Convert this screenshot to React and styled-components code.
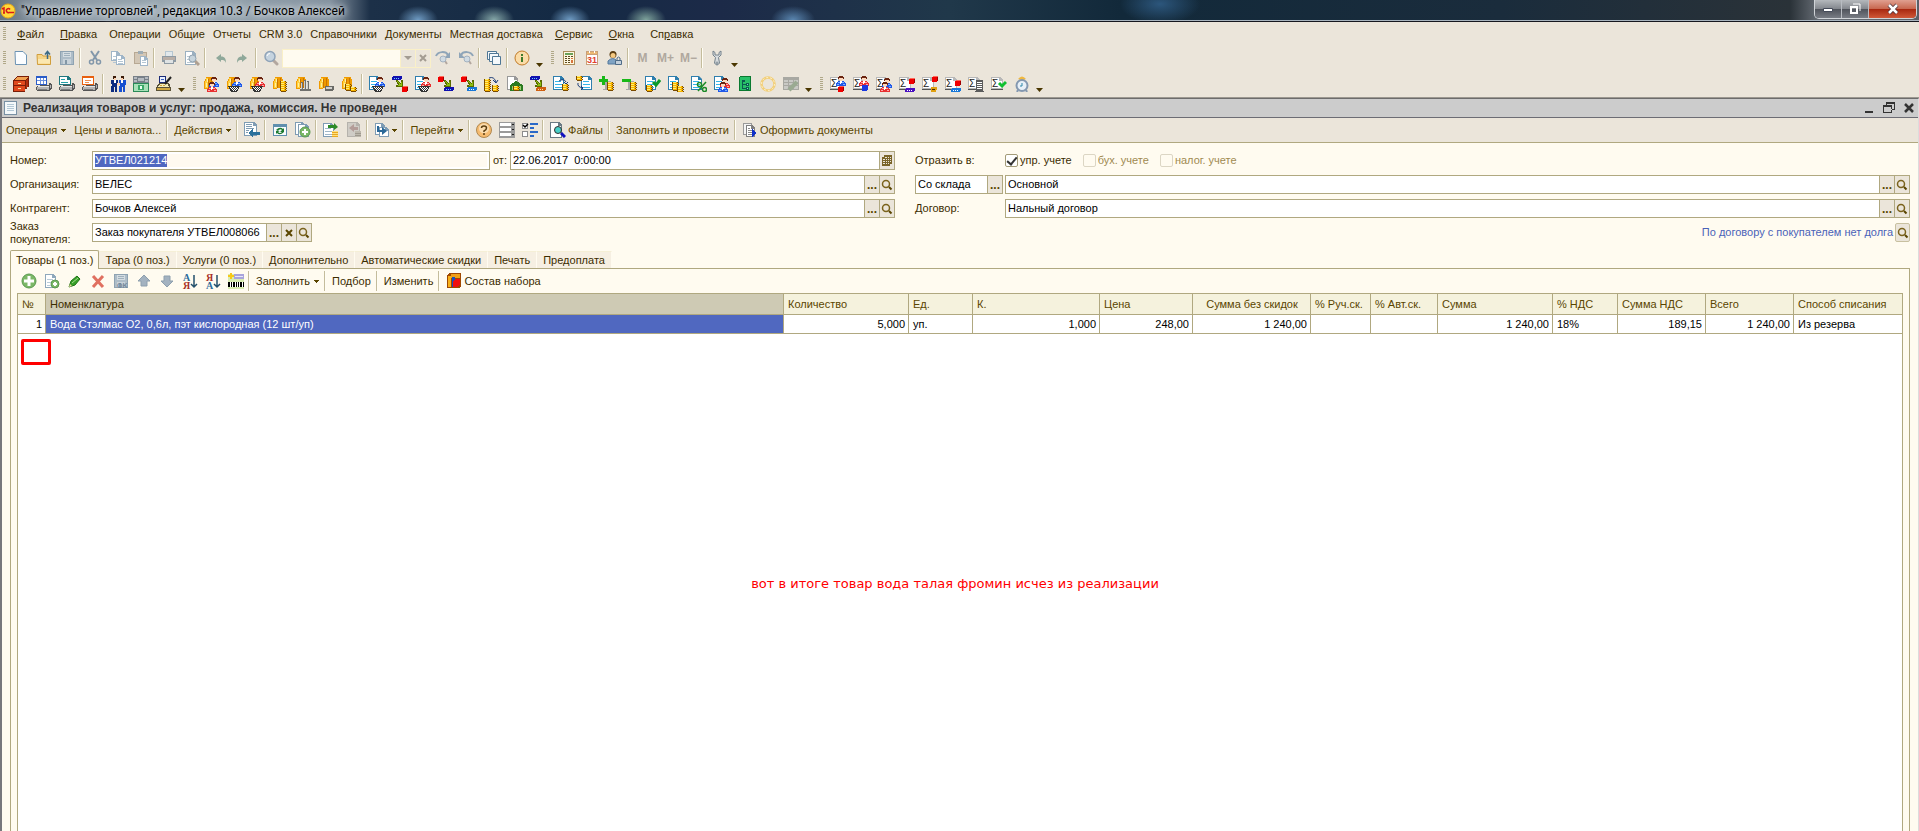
import React, { useEffect, useRef } from 'react';
import styled, { createGlobalStyle, css } from 'styled-components';

/* ---------- icon parts ---------- */

const Svg = ({ children, size = 16, crisp = true }) => (
  <svg width={size} height={size} viewBox={`0 0 ${size} ${size}`} shapeRendering={crisp ? 'crispEdges' : 'auto'} aria-hidden="true">
    {children}
  </svg>
);

const Page = ({ x = 0, y = 0, w = 11, h = 14, line = '#2f7fae', rows = '#35b5e8' }) => (
  <g transform={`translate(${x} ${y})`}>
    <path d={`M0 0H${w - 3}L${w} 3V${h}H0Z`} fill={line} />
    <path d={`M1 1H${w - 4}V4H${w - 1}V${h - 1}H1Z`} fill="#fff" />
    {rows && <path d={`M2 5H${w - 3}V6H2ZM2 8H${w - 2}V9H2ZM2 11H${w - 2}V12H2Z`} fill={rows} />}
  </g>
);

const Coins = ({ x = 0, y = 0, n = 3 }) => (
  <g transform={`translate(${x} ${y})`}>
    {Array.from({ length: n }, (_, i) => (
      <g key={i} transform={`translate(0 ${i * 2})`}>
        <path d="M0 0H6V1H7V2H6V3H1V2H0Z" fill="#7a4a00" />
        <path d="M1 0H5V1H6V2H1Z" fill="#f8b400" />
        <path d="M1 0H4V1H1Z" fill="#ffee70" />
      </g>
    ))}
  </g>
);

const Man = ({ x = 0, y = 0, color = '#2058e8', light = '#7ab0ff' }) => (
  <g transform={`translate(${x} ${y})`}>
    <path d="M3 0H7V1H8V3H7V2H3V3H2V1H3Z" fill="#6a2410" />
    <path d="M3 2H7V4H6V5H4V4H3Z" fill="#ffd8bc" />
    <path d="M2 5H8V6H9V7H10V10H0V7H1V6H2Z" fill={color} />
    <path d="M2 6H4V7H2ZM6 6H8V7H6ZM1 8H3V9H1ZM7 8H9V9H7Z" fill={light} />
    <path d="M4 5H6V7H5V8H4Z" fill="#fff" />
  </g>
);

const RedMan = props => <Man color="#e83030" light="#ffa8a8" {...props} />;

const Cart = ({ x = 0, y = 0 }) => (
  <g transform={`translate(${x} ${y})`}>
    <path d="M0 0H12V1H11V3H10V5H9V6H3V5H2V3H1V1H0Z" fill="#333" />
    <path d="M2 1H3V2H2ZM4 1H5V2H4ZM6 1H7V2H6ZM8 1H9V2H8ZM3 2H4V3H3ZM5 2H6V3H5ZM7 2H8V3H7ZM9 2H10V3H9ZM4 3H5V4H4ZM6 3H7V4H6ZM8 3H9V4H8ZM5 4H6V5H5ZM7 4H8V5H7Z" fill="#fff" />
  </g>
);

const Folder = () => (
  <g>
    <path d="M3 1H10V3H11V12H5V13H1V5H2V3H3Z" fill="#f09a00" />
    <path d="M3 2H5V3H6V12H2V5H3Z" fill="#ffd040" />
    <path d="M5 3H6V12H5ZM8 2H9V12H8Z" fill="#c87400" />
    <path d="M4 3H5V6H4ZM3 7H4V11H3Z" fill="#fff0a0" />
  </g>
);

const RedBox = ({ x = 0, y = 0 }) => (
  <g transform={`translate(${x} ${y})`}>
    <path d="M1 0H6V5H5V6H0V1H1Z" fill="#f00000" />
    <path d="M1 0H6V1H1Z" fill="#ff6a5a" />
    <path d="M5 1H6V5H5Z" fill="#a00000" />
  </g>
);

const Slab = ({ x = 0, y = 0, color = '#1010b0', dots = '#6ad0ff' }) => (
  <g transform={`translate(${x} ${y})`}>
    <path d="M1 0H10V3H9V4H0V1H1Z" fill={color} />
    <path d="M2 2H3V3H2ZM4 2H5V3H4ZM6 2H7V3H6Z" fill={dots} />
  </g>
);

const GreenArrow = ({ x = 0, y = 0 }) => (
  <g transform={`translate(${x} ${y})`}>
    <path d="M0 0H2V1H3V2H4V3H5V0H7V7H0V5H2V4H1V2H0Z" fill="#5a6a00" />
    <path d="M1 1H2V2H3V3H4V4H5V2H6V6H2V5H3V3H2V2H1Z" fill="#8cc010" />
  </g>
);

const Tray = ({ children }) => (
  <g>
    {children}
    <path d="M1 10H4V9H13V7H15V8H16V13H15V14H14V15H1V14H0V11H1Z" fill="#555" />
    <path d="M1 11H13V14H1ZM14 9H15V12H14Z" fill="#b4b4b4" />
    <path d="M2 10H13V11H2Z" fill="#e6e6e6" />
    <path d="M2 13H11V14H2Z" fill="#7c7c7c" />
  </g>
);

const Curve = ({ d, color = '#1c3c78' }) => <path d={d} fill="none" stroke={color} strokeWidth="1" shapeRendering="auto" />;

const SigmaPage = ({ children }) => (
  <g>
    <path d="M0 1H9L12 4V13H0Z" fill="#b8b8b8" />
    <path d="M1 2H8V5H11V12H1Z" fill="#fff" />
    <path d="M0 13H12V14H0Z" fill="#555" />
    <text x="1" y="11" fontSize="10" fontFamily="Liberation Sans, sans-serif" fill="#222">Σ</text>
    {children}
  </g>
);

const Lens = ({ rim, glass, handle }) => (
  <g shapeRendering="auto">
    <path d="M10 10L14 14" stroke={handle} strokeWidth="3" strokeLinecap="round" />
    <circle cx="7" cy="6.500" r="5" fill={glass} stroke={rim} strokeWidth="1.500" />
    <path d="M4 6A3 3 0 0 1 7 3.500" stroke="#fff" fill="none" />
  </g>
);

const Floppy = () => (
  <g>
    <path d="M1 1H15V15H1Z" fill="#8fa3b2" />
    <path d="M2 2H14V14H2Z" fill="#aebdc8" />
    <path d="M4 2H12V7H4Z" fill="#d5dde2" />
    <path d="M5 3H11V4H5ZM5 5H11V6H5Z" fill="#9fb0bc" />
    <path d="M4 9H12V14H4Z" fill="#c9d3da" />
    <path d="M6 10H8V14H6Z" fill="#8397a6" />
  </g>
);

const PlusDisc = ({ x, y, r, w }) => (
  <g shapeRendering="auto">
    <circle cx={x} cy={y} r={r} fill="#7cb868" stroke="#5a9a50" />
    <path d={`M${x - r + 2} ${y}H${x + r - 2}M${x} ${y - r + 2}V${y + r - 2}`} stroke="#fff" strokeWidth={w} />
  </g>
);

const icons = {
  newFile: <path d="M2 1.500H10L13.500 5V14.500H2.500Z" fill="#fbfdff" stroke="#6c93b4" shapeRendering="auto" />,
  open: (
    <g shapeRendering="auto">
      <path d="M1 4.500H6L7 6H14.500V14.500H1.500Z" fill="#f6d588" stroke="#d19e3c" />
      <path d="M2 13.500H14V9H2Z" fill="#fbe7b0" />
      <path d="M11.500 9V2M9 4.500L11.500 1.500L14 4.500" stroke="#3b6a86" fill="none" strokeWidth="1.500" />
    </g>
  ),
  save: <Floppy />,
  cut: (
    <g shapeRendering="auto" fill="none" stroke="#8297aa" strokeWidth="2">
      <path d="M4 1L10 10M12 1L6 10" />
      <circle cx="4.500" cy="12" r="2" strokeWidth="1.500" />
      <circle cx="11.500" cy="12" r="2" strokeWidth="1.500" />
    </g>
  ),
  copy: (
    <g>
      <Page x={1} y={1} w={9} h={10} line="#9fb5c8" rows="#b4c6d4" />
      <Page x={6} y={5} w={9} h={10} line="#9fb5c8" rows={null} />
      <path d="M8 9H12V10H8ZM8 11H13V12H8ZM8 13H13V14H8Z" fill="#b4c6d4" />
    </g>
  ),
  paste: (
    <g>
      <path d="M1 2H14V14H1Z" fill="#b7a893" />
      <path d="M2 3H13V13H2Z" fill="#d3c7b6" />
      <path d="M5 1H10V4H5Z" fill="#9eacb5" />
      <Page x={7} y={6} w={8} h={10} line="#9fb5c8" rows={null} />
      <path d="M9 10H13V11H9ZM9 12H13V13H9Z" fill="#b4c6d4" />
    </g>
  ),
  print: (
    <g>
      <path d="M4 1H12V7H4Z" fill="#b5c6d1" />
      <path d="M5 2H11V6H5Z" fill="#e2e8eb" />
      <path d="M1 6H15V12H13V14H3V12H1Z" fill="#8f9ba4" />
      <path d="M2 7H14V10H2Z" fill="#b9aea6" />
      <path d="M4 10H12V13H4Z" fill="#dfe3e4" />
    </g>
  ),
  preview: (
    <g>
      <Page x={1} y={1} w={11} h={14} line="#9bb0c0" rows="#b8c7d1" />
      <path d="M10 10L15 15" stroke="#b0a090" strokeWidth="3" shapeRendering="auto" />
      <circle cx="8.500" cy="8.500" r="3.500" fill="#c7d4dc" stroke="#90a2b0" shapeRendering="auto" />
    </g>
  ),
  undo: <path d="M4 8L9 4V6.500C13 6.500 14 9 14 13C13 10.500 12 10 9 10V12Z" fill="#8fa89a" shapeRendering="auto" />,
  redo: <path d="M12 8L7 4V6.500C3 6.500 2 9 2 13C3 10.500 4 10 7 10V12Z" fill="#8fa89a" shapeRendering="auto" />,
  search: <Lens rim="#8fa3b8" glass="#c5d3df" handle="#b3a79f" />,
  findNext: (
    <g shapeRendering="auto">
      <path d="M1 6C3 1 11 1 13 5" fill="none" stroke="#8fa5b8" strokeWidth="2" />
      <path d="M15 2V8H9Z" fill="#8fa5b8" />
      <path d="M10 11L12 14" stroke="#b3a79f" strokeWidth="2" />
      <circle cx="8" cy="9" r="3" fill="#d0dbe3" stroke="#a3b2c0" />
    </g>
  ),
  findPrev: (
    <g shapeRendering="auto">
      <path d="M15 6C13 1 5 1 3 5" fill="none" stroke="#8fa5b8" strokeWidth="2" />
      <path d="M1 2V8H7Z" fill="#8fa5b8" />
      <path d="M11 11L13 14" stroke="#b3a79f" strokeWidth="2" />
      <circle cx="9" cy="9" r="3" fill="#d0dbe3" stroke="#a3b2c0" />
    </g>
  ),
  windows: (
    <g fill="#f4f8fb" stroke="#4f7795" shapeRendering="auto">
      <path d="M1.500 1.500H10.500V9.500H1.500Z" />
      <path d="M3.500 3.500H12.500V11.500H3.500Z" />
      <path d="M6.500 6.500H14.500V14.500H6.500Z" />
    </g>
  ),
  info: (
    <g shapeRendering="auto">
      <circle cx="8" cy="8" r="7" fill="#fbdca8" stroke="#c07a28" />
      <path d="M7 7H9V12H7ZM7 4H9V6H7Z" fill="#3f7a2c" />
    </g>
  ),
  calc: (
    <g>
      <path d="M2 1H14V15H2Z" fill="#ab8f5c" />
      <path d="M3 2H13V14H3Z" fill="#fff8e0" />
      <path d="M4 3H12V5H4Z" fill="#6aa25a" />
      <path d="M4 6H6V7H4ZM7 6H9V7H7ZM10 6H12V7H10ZM4 8H6V9H4ZM7 8H9V9H7ZM4 10H6V11H4ZM7 10H9V11H7ZM4 12H6V13H4ZM7 12H9V13H7Z" fill="#5c4a20" />
      <path d="M10 8H12V9H10ZM10 10H12V13H10Z" fill="#d8743c" />
    </g>
  ),
  calendar: (
    <g>
      <path d="M2 1H14V15H2Z" fill="#c9a07a" />
      <path d="M3 5H13V14H3Z" fill="#fff" />
      <path d="M3 2H13V4H3Z" fill="#ecb873" />
      <path d="M5 1H6V3H5ZM10 1H11V3H10Z" fill="#fff" />
      <text x="3" y="13" fontSize="9" fontWeight="bold" fontFamily="Liberation Sans, sans-serif" fill="#e0402c">31</text>
    </g>
  ),
  userLock: (
    <g shapeRendering="auto">
      <circle cx="6" cy="4.500" r="3.500" fill="#5a3c10" />
      <circle cx="6" cy="5.500" r="2.500" fill="#f4c880" />
      <path d="M1 14V11Q6 6 10 11V14Z" fill="#7fa3c4" stroke="#54789c" />
      <path d="M8.500 10.500H14.500V14.500H8.500Z" fill="#c3d0dc" stroke="#4f6c88" />
      <path d="M10 10V8Q11.500 6 13 8V10" fill="none" stroke="#4f6c88" />
    </g>
  ),
  wrench: (
    <g shapeRendering="auto">
      <path d="M4 1V5L6.500 7.500L5.500 13Q8 17 10.500 13L9.500 7.500L12 5V1L10 2.500V5H6V2.500Z" fill="#d8dcde" stroke="#74828c" />
      <circle cx="8" cy="13" r="1" fill="#fff" stroke="#74828c" />
    </g>
  ),
  cabinet: (
    <g>
      <path d="M4 0H16V11H14V13H12V16H0V4H1V3H2V2H3V1H4Z" fill="#7a1e08" />
      <path d="M4 1H15L12 4H1Z" fill="#f0a050" />
      <path d="M1 5H12V9H1ZM1 10H12V15H1Z" fill="#e0481c" />
      <path d="M5 7H8V8H5ZM5 12H8V13H5Z" fill="#ffe0a0" />
      <path d="M13 4L15 2V10L13 13Z" fill="#b02c0c" />
    </g>
  ),
  trayTable: (
    <Tray>
      <path d="M0 0H11V9H0Z" fill="#2a5cc8" />
      <path d="M1 2H10V8H1Z" fill="#fff" />
      <path d="M4 2H5V8H4ZM7 2H8V8H7ZM1 4H10V5H1Z" fill="#6a90e0" />
    </Tray>
  ),
  trayDoc: (
    <Tray>
      <path d="M0 0H9L12 3V9H0Z" fill="#207880" />
      <path d="M1 1H8V4H11V8H1Z" fill="#fff" />
      <path d="M2 3H6V4H2ZM2 6H9V7H2Z" fill="#25a0a8" />
    </Tray>
  ),
  trayNote: (
    <Tray>
      <path d="M0 0H12V9H0Z" fill="#e86010" />
      <path d="M1 2H11V8H1Z" fill="#fff" />
      <path d="M3 4H9V5H3ZM3 6H7V7H3Z" fill="#f09050" />
    </Tray>
  ),
  partners: (
    <g>
      <path d="M3 0H6V3H3ZM11 0H14V3H11Z" fill="#3a1a08" />
      <path d="M4 2H6V4H4ZM11 2H13V4H11Z" fill="#ffd0b0" />
      <path d="M1 4H8V9H7V16H5V11H4V16H1V10H2V8H1Z" fill="#0c2c80" />
      <path d="M9 4H16V9H15V16H13V11H12V16H9V10H10V8H9Z" fill="#1850d0" />
      <path d="M4 4H6V7H4ZM11 4H13V7H11Z" fill="#fff" />
      <path d="M7 7H10V9H7Z" fill="#ffd0b0" />
    </g>
  ),
  money: (
    <g>
      <path d="M0 0H16V7H0Z" fill="#788088" />
      <path d="M1 1H4V3H1ZM12 1H15V3H12ZM1 4H4V6H1ZM12 4H15V6H12ZM5 2H11V5H5Z" fill="#b5bac0" />
      <path d="M0 7H16V16H0Z" fill="#2a8a58" />
      <path d="M1 8H15V15H1Z" fill="#a8e0b8" />
      <path d="M5 9H11V14H5Z" fill="#3aa868" />
      <path d="M7 10H9V13H7Z" fill="#e8fff0" />
    </g>
  ),
  register: (
    <g>
      <path d="M3 0H10V7H3Z" fill="#1c2c78" />
      <path d="M4 1H9V6H4Z" fill="#e8f0ff" />
      <path d="M5 3H8V4H5Z" fill="#3a60c0" />
      <path d="M3 7H13L15 12V15H0V12Z" fill="#5a5238" />
      <path d="M4 8H12L13 11H2Z" fill="#f4ecb8" />
      <path d="M4 9H6V10H4ZM7 9H9V10H7ZM1 12H14V14H1Z" fill="#d0a840" />
      <path d="M15 1L9 8" stroke="#222" strokeWidth="2" shapeRendering="auto" />
    </g>
  ),
  folderMen: <g><Folder /><Man x={6} y={1} /><RedMan x={4} y={6} /></g>,
  folderCartMan: <g><Folder /><Man x={6} y={1} /><Cart x={2} y={10} /></g>,
  folderCartRed: <g><Folder /><RedMan x={6} y={1} /><Cart x={2} y={10} /></g>,
  folderCoins: <g><Folder /><Coins x={8} y={5} n={5} /></g>,
  folderBars: (
    <g>
      <Folder />
      <path d="M6 6H8V13H6ZM9 4H11V13H9ZM12 5H14V13H12ZM5 13H16V15H5Z" fill="#70706c" />
      <path d="M6 7H7V13H6ZM9 5H10V13H9ZM12 6H13V13H12Z" fill="#d0d0cc" />
    </g>
  ),
  folderBox: <g><Folder /><path d="M7 10H16V14H15V15H7Z" fill="#6a6a66" /><path d="M8 11H14V13H8Z" fill="#d0d0cc" /></g>,
  folderSteps: <g><Folder /><Coins x={4} y={8} n={3} /><Coins x={9} y={11} n={2} /></g>,
  docCartMan: <g><Page /><Man x={6} y={1} /><Cart x={3} y={10} /></g>,
  docCartRed: <g><Page /><RedMan x={6} y={1} /><Cart x={3} y={10} /></g>,
  slabToRed: <g><Slab x={0} y={0} /><GreenArrow x={4} y={4} /><RedBox x={10} y={10} /></g>,
  redToSlab: <g><RedBox /><GreenArrow x={6} y={4} /><Slab x={6} y={11} /></g>,
  redToPanel: <g><RedBox /><GreenArrow x={6} y={4} /><Slab x={6} y={11} color="#1878d8" dots="#fff" /></g>,
  slabToSlab: <g><Slab /><GreenArrow x={5} y={4} /><Slab x={6} y={11} color="#d06010" dots="#ffe0a0" /></g>,
  coinsToCoins: <g><Coins x={0} y={3} n={6} /><Coins x={8} y={9} n={3} /><Curve d="M5 2Q10 0 12 6M9 4L12 7L14 4" /></g>,
  docBank: (
    <g>
      <Page x={0} w={11} h={14} line="#999" rows={null} />
      <path d="M3 9L9 5L16 9V15H3Z" fill="#2c7a20" />
      <path d="M5 10H14V14H5Z" fill="#98d070" />
      <Coins x={6} y={10} n={2} />
    </g>
  ),
  docToCoins: <g><Page /><Coins x={9} y={8} n={3} /><Curve d="M6 5Q11 2 13 6M11 6L13 8L15 6" /></g>,
  coinsToDoc: <g><Page x={5} /><Coins x={0} y={0} n={2} /><Curve d="M2 7Q1 11 7 12M5 10L7 12L5 14" /></g>,
  plusCoins: <g><path d="M6 5H12V14H4V13H6Z" fill="#a8a8a8" /><Coins x={8} y={6} n={4} /><path d="M3 0H6V3H9V6H6V9H3V6H0V3H3Z" fill="#18b818" /></g>,
  minusCoins: <g><path d="M6 5H12V14H4V13H6Z" fill="#a8a8a8" /><Coins x={8} y={6} n={4} /><path d="M0 3H9V6H0Z" fill="#18b818" /></g>,
  docCheck: <g><Page /><Coins x={1} y={9} n={3} /><path d="M8 6L11 9L15 4" stroke="#0a9a28" strokeWidth="3" fill="none" shapeRendering="auto" /></g>,
  docCoins: <g><Page /><Coins x={4} y={6} n={4} /><Coins x={9} y={10} n={3} /></g>,
  docPercent: (
    <g shapeRendering="auto">
      <Page />
      <path d="M15 6L7 15" stroke="#1c8a28" strokeWidth="1.500" />
      <circle cx="8.500" cy="8.500" r="2" fill="none" stroke="#1c8a28" strokeWidth="1.500" />
      <circle cx="13.500" cy="13.500" r="2" fill="none" stroke="#1c8a28" strokeWidth="1.500" />
    </g>
  ),
  docMen: <g><Page /><RedMan x={6} y={2} /><Man x={4} y={6} /></g>,
  tree: (
    <g>
      <path d="M3 0H14V15H2V1H3Z" fill="#0a7a30" />
      <path d="M3 1H13V14H3Z" fill="#28c068" />
      <path d="M5 4H8V6H6V8H9V7H12V10H9V9H6V12H9V11H12V14H9V13H5Z" fill="#0c5a50" />
      <path d="M10 8H11V9H10ZM10 12H11V13H10Z" fill="#70e0c0" />
    </g>
  ),
  ring: (
    <g shapeRendering="auto" fill="none">
      <circle cx="8" cy="8" r="6.500" stroke="#f2cf7a" strokeWidth="2.500" />
      <circle cx="8" cy="8" r="6.500" stroke="#fdf0c8" strokeWidth="1" strokeDasharray="2 2" />
    </g>
  ),
  gridEdit: (
    <g>
      <path d="M0 1H16V14H0Z" fill="#a8a8a2" />
      <path d="M1 4H5V6H1ZM6 4H10V6H6ZM11 4H15V6H11ZM1 7H5V9H1ZM6 7H10V9H6ZM11 7H15V9H11ZM1 10H5V13H1ZM11 10H15V13H11Z" fill="#c9c9c5" />
      <path d="M14 6L6 14" stroke="#9aaa92" strokeWidth="4" shapeRendering="auto" />
    </g>
  ),
  sigmaManRed: <SigmaPage><Man x={6} y={0} /><RedBox x={8} y={10} /></SigmaPage>,
  sigmaRedBlue: <SigmaPage><RedMan x={6} y={0} /><path d="M9 9H15V14H14V15H9Z" fill="#1838e0" /></SigmaPage>,
  sigmaMen: <SigmaPage><Man x={6} y={2} /><RedMan x={4} y={6} /></SigmaPage>,
  sigmaBoxSlab: <SigmaPage><RedBox x={10} y={2} /><Slab x={6} y={12} color="#4a10c0" dots="#fff" /></SigmaPage>,
  sigmaBoxGold: <SigmaPage><RedBox x={10} y={0} /><path d="M9 11H15V14H14V16H9Z" fill="#e0a010" /><path d="M10 13H13V14H10Z" fill="#4a2c00" /></SigmaPage>,
  sigmaBoxBlue: <SigmaPage><RedBox x={10} y={4} /><Slab x={6} y={12} color="#1878d8" dots="#fff" /></SigmaPage>,
  sigmaList: <SigmaPage><path d="M8 4H15V15H16V16H7V15H8Z" fill="#5c5c5c" /><path d="M9 6H14V7H9ZM9 8H14V9H9ZM9 10H14V11H9ZM9 12H14V13H9Z" fill="#fff" /></SigmaPage>,
  sigmaCheck: <SigmaPage><path d="M8 7L11 10L15 6" stroke="#10c030" strokeWidth="3" fill="none" shapeRendering="auto" /></SigmaPage>,
  alarm: (
    <g shapeRendering="auto">
      <path d="M4 3Q8 -2 12 3Q8 5 4 3Z" fill="#f0b840" />
      <circle cx="8" cy="9.500" r="5.500" fill="#e8f0f8" stroke="#8498b0" strokeWidth="2" />
      <path d="M8 7V10H6" stroke="#2f88a8" fill="none" />
      <path d="M4 14L3 16M12 14L13 16" stroke="#8498b0" strokeWidth="2" />
    </g>
  ),
  doc: (
    <g>
      <path d="M1 1H14V15H1Z" fill="#7890a4" />
      <path d="M2 2H13V14H2Z" fill="#f4f8fa" />
      <path d="M4 4H11V5H4ZM4 6H11V7H4ZM4 8H11V9H4ZM4 10H11V11H4Z" fill="#b3c8d6" />
    </g>
  ),
  docBack: (
    <g>
      <Page x={0} y={0} w={13} h={14} line="#7f9cb4" rows={null} />
      <path d="M2 2H8V3H2ZM2 4H8V5H2ZM2 6H10V7H2ZM2 8H5V9H2ZM2 10H4V11H2Z" fill="#7f9cb4" />
      <path d="M4 11L9 7V10H16V13H9V15Z" fill="#2a709c" />
    </g>
  ),
  refresh: (
    <g>
      <path d="M1 2H15V14H1Z" fill="#5f8fae" />
      <path d="M2 5H14V13H2Z" fill="#f8fbfd" />
      <path d="M4 8Q8 4 11 7L12 6V10H8L10 8Q8 6 6 9ZM12 10Q8 14 5 11L4 12V9H8L6 10Q8 12 10 10Z" fill="#1c7a30" shapeRendering="auto" />
    </g>
  ),
  docPlus: (
    <g>
      <Page x={0} y={0} w={10} h={13} line="#7f9cb4" rows={null} />
      <Page x={3} y={2} w={11} h={13} line="#7f9cb4" rows="#b9cbd8" />
      <PlusDisc x={10} y={10} r={5} w={2} />
    </g>
  ),
  rowCopy: (
    <g>
      <Page x={1} y={1} w={11} h={14} line="#8fa8bc" rows="#b9cbd8" />
      <PlusDisc x={11} y={11} r={4} w={2} />
    </g>
  ),
  post: (
    <g>
      <Page x={0} y={1} w={11} h={14} line="#7f9cb4" rows="#9fb6c8" />
      <path d="M5 3H11V1L15 5L11 8V6H5Z" fill="#2c8a28" shapeRendering="auto" />
      <path d="M9 9H15V15H9Z" fill="#e8a820" />
      <path d="M9 9H15V10H9ZM9 11H15V12H9ZM9 13H15V14H9Z" fill="#ffe080" />
    </g>
  ),
  unpost: (
    <g>
      <path d="M1 0H11L14 3V15H1Z" fill="#b5b2ac" />
      <path d="M2 1H10V4H13V14H2Z" fill="#cfccc6" />
      <path d="M12 8H8V10L3 6L8 2V5H12Z" fill="#b39c98" shapeRendering="auto" />
      <path d="M9 9H15V15H9Z" fill="#bdb8ad" />
      <path d="M9 11H15V12H9ZM9 13H15V14H9Z" fill="#9e998e" />
    </g>
  ),
  goTo: (
    <g>
      <Page x={1} y={1} w={10} h={12} line="#7f9cb4" rows={null} />
      <Page x={5} y={5} w={10} h={10} line="#7f9cb4" rows={null} />
      <path d="M3 4V10H8V13L13 9L8 5V8H5V4Z" fill="#2a6898" shapeRendering="auto" />
    </g>
  ),
  help: (
    <g shapeRendering="auto">
      <circle cx="8" cy="8" r="7.500" fill="#f6bb70" stroke="#b08850" />
      <circle cx="8" cy="6.500" r="5" fill="#fbdcae" />
      <path d="M5.500 6Q5.500 4 8 4T10.500 6T8 9V10" fill="none" stroke="#5a3c10" strokeWidth="1.500" />
      <circle cx="8" cy="12" r="1" fill="#5a3c10" />
    </g>
  ),
  listView: (
    <g>
      <path d="M0 0H16V16H0Z" fill="#9a9a9a" />
      <path d="M1 1H12V4H1ZM1 6H12V9H1ZM1 11H12V14H1Z" fill="#fff" />
      <path d="M13 2H15V3H13ZM13 7H15V8H13ZM13 12H15V13H13Z" fill="#222" />
    </g>
  ),
  checks: (
    <g>
      <path d="M0 1H6V7H0ZM0 9H6V15H0Z" fill="#8c8c8c" />
      <path d="M1 2H5V6H1ZM1 10H5V14H1Z" fill="#fff" />
      <path d="M1 3L3 5L6 2" stroke="#000" strokeWidth="1.500" fill="none" shapeRendering="auto" />
      <path d="M8 1H16V3H8ZM8 5H12V7H8ZM8 9H16V11H8ZM8 13H12V15H8Z" fill="#2a68c8" />
    </g>
  ),
  files: (
    <g>
      <path d="M0 0H9L12 3V16H0Z" fill="#6a7a84" />
      <path d="M1 1H8V4H11V15H1Z" fill="#fff" />
      <path d="M11 11L15 15" stroke="#1010c0" strokeWidth="3" shapeRendering="auto" />
      <circle cx="8" cy="8" r="3.500" fill="#48d0c8" stroke="#303030" shapeRendering="auto" />
    </g>
  ),
  issueDocs: (
    <g>
      <path d="M1 1H10V13H1Z" fill="#9a9a9a" />
      <path d="M2 2H9V12H2Z" fill="#f4f4f4" />
      <path d="M4 3H10L13 6V15H4Z" fill="#808080" />
      <path d="M5 4H9V7H12V14H5Z" fill="#fff" />
      <path d="M6 6H8V7H6ZM6 8H11V9H6ZM6 10H10V11H6ZM6 12H10V13H6Z" fill="#8a8a8a" />
      <path d="M10 7L14 11L10 15Z" fill="#1030c8" />
    </g>
  ),
  add: <PlusDisc x={8} y={8} r={7} w={3} />,
  edit: (
    <g shapeRendering="auto">
      <path d="M2 14L4 8L10 3L13 6L8 12Z" fill="#38a028" stroke="#1f7418" />
      <path d="M5 10L11 5" stroke="#a4dc90" />
      <path d="M2 14L3 11L5 13Z" fill="#f0d8a0" />
    </g>
  ),
  remove: <path d="M3 3L13 14M13 3L3 14" stroke="#e07060" strokeWidth="3" shapeRendering="auto" />,
  saveOk: (
    <g>
      <Floppy />
      <text x="4" y="15" fontSize="7" fontWeight="bold" fontFamily="Liberation Sans, sans-serif" fill="#74889a">OK</text>
    </g>
  ),
  up: <path d="M8 2L14 8H11V13H5V8H2Z" fill="#a3b2c0" stroke="#8d9fae" shapeRendering="auto" />,
  down: <path d="M8 14L14 8H11V3H5V8H2Z" fill="#a3b2c0" stroke="#8d9fae" shapeRendering="auto" />,
  sortAsc: (
    <g fontSize="10" fontWeight="bold" fontFamily="Liberation Serif, serif">
      <text x="1" y="8" fill="#2c6c9c">А</text>
      <text x="1" y="16" fill="#a83028">Я</text>
      <path d="M12 2V14M9 11L12 14L15 11" stroke="#24506c" fill="none" strokeWidth="1.500" shapeRendering="auto" />
    </g>
  ),
  sortDesc: (
    <g fontSize="10" fontWeight="bold" fontFamily="Liberation Serif, serif">
      <text x="1" y="8" fill="#a83028">Я</text>
      <text x="1" y="16" fill="#2c6c9c">А</text>
      <path d="M12 2V14M9 11L12 14L15 11" stroke="#24506c" fill="none" strokeWidth="1.500" shapeRendering="auto" />
    </g>
  ),
  barcode: (
    <g>
      <path d="M0 1H16V16H0Z" fill="#d8ecb0" />
      <path d="M6 1H16V6H6Z" fill="#a8a4dc" />
      <path d="M7 3H15V4H7Z" fill="#e8e6fa" />
      <path d="M2 0H4V2H6V4H4V6H2V4H0V2H2Z" fill="#f8c818" />
      <path d="M0 9H16V14H0Z" fill="#fff" />
      <path d="M0 9H2V14H0ZM3 9H4V14H3ZM5 9H7V14H5ZM8 9H9V14H8ZM10 9H11V14H10ZM12 9H14V14H12ZM15 9H16V14H15Z" fill="#000" />
    </g>
  ),
  bundle: (
    <g>
      <path d="M1 2L4 0H15V13L13 15H1Z" fill="#a04800" />
      <path d="M2 3H5V14H2Z" fill="#f8b018" />
      <path d="M5 1H14V5H5Z" fill="#f0a018" />
      <path d="M6 4H9V14H6Z" fill="#1850c0" />
      <path d="M7 8L9 6H14V11L12 14H7Z" fill="#f01010" />
    </g>
  ),
};

/* ---------- data ---------- */

const menu = [
  { text: 'Файл', key: 0 }, { text: 'Правка', key: 0 }, { text: 'Операции' }, { text: 'Общие' },
  { text: 'Отчеты' }, { text: 'CRM 3.0' }, { text: 'Справочники' }, { text: 'Документы' },
  { text: 'Местная доставка' }, { text: 'Сервис', key: 0 }, { text: 'Окна', key: 0 }, { text: 'Справка', key: 2 },
];

const fileTools = [
  ['newFile', 'Новый'], ['open', 'Открыть'], ['save', 'Сохранить'], null,
  ['cut', 'Вырезать'], ['copy', 'Копировать'], ['paste', 'Вставить'], null,
  ['print', 'Печать'], ['preview', 'Просмотр'], null,
  ['undo', 'Отменить'], ['redo', 'Вернуть'], null, ['search', 'Найти'],
];

const commonTools = [
  ['cabinet', 'Номенклатура'], ['trayTable', 'Журнал'], ['trayDoc', 'Документы'], ['trayNote', 'Заметки'], null,
  ['partners', 'Контрагенты'], ['money', 'Касса'], ['register', 'Регистрация'],
];

const tradeTools = [
  ['folderMen', 'Контакты'], ['folderCartMan', 'Покупатели'], ['folderCartRed', 'Поставщики'], ['folderCoins', 'Деньги'],
  ['folderBars', 'Склад'], ['folderBox', 'Хранение'], ['folderSteps', 'Расчеты'], null,
  ['docCartMan', 'Заказ покупателя'], ['slabToRed', 'Реализация'], ['docCartRed', 'Заказ поставщику'],
  ['redToSlab', 'Поступление'], ['redToPanel', 'Перемещение'], ['coinsToCoins', 'Обмен'], ['docBank', 'Банк'],
  ['slabToSlab', 'Возврат'], ['docToCoins', 'Счет'], ['coinsToDoc', 'Оплата'], ['plusCoins', 'Приход'],
  ['minusCoins', 'Расход'], ['docCheck', 'Сверка'], ['docCoins', 'Платеж'], ['docPercent', 'Скидки'],
  ['docMen', 'Взаиморасчеты'], ['tree', 'Структура'], ['ring', 'Монитор'], ['gridEdit', 'Таблица'],
];

const reportTools = [
  ['sigmaManRed', 'Продажи'], ['sigmaRedBlue', 'Закупки'], ['sigmaMen', 'Отчет по контрагентам'],
  ['sigmaBoxSlab', 'Остатки'], ['sigmaBoxGold', 'Резервы'], ['sigmaBoxBlue', 'Обороты'],
  ['sigmaList', 'Ведомость'], ['sigmaCheck', 'Анализ'], ['alarm', 'Напоминания'],
];

const rowTools = [
  ['add', 'Добавить'], ['rowCopy', 'Скопировать'], ['edit', 'Редактировать'], ['remove', 'Удалить'],
  ['saveOk', 'Завершить'], ['up', 'Вверх'], ['down', 'Вниз'], ['sortAsc', 'По возрастанию'],
  ['sortDesc', 'По убыванию'], ['barcode', 'Штрихкод'], null,
];

const tabs = ['Товары (1 поз.)', 'Тара (0 поз.)', 'Услуги (0 поз.)', 'Дополнительно', 'Автоматические скидки', 'Печать', 'Предоплата'];

const columns = [
  { title: '№', width: 28, value: '1', right: true },
  { title: 'Номенклатура', value: 'Вода Стэлмас О2, 0,6л, пэт кислородная (12 шт/уп)', active: true },
  { title: 'Количество', width: 125, value: '5,000', right: true },
  { title: 'Ед.', width: 64, value: 'уп.' },
  { title: 'К.', width: 127, value: '1,000', right: true },
  { title: 'Цена', width: 93, value: '248,00', right: true },
  { title: 'Сумма без скидок', width: 118, value: '1 240,00', right: true, center: true },
  { title: '% Руч.ск.', width: 60, value: '' },
  { title: '% Авт.ск.', width: 67, value: '' },
  { title: 'Сумма', width: 115, value: '1 240,00', right: true },
  { title: '% НДС', width: 65, value: '18%' },
  { title: 'Сумма НДС', width: 88, value: '189,15', right: true },
  { title: 'Всего', width: 88, value: '1 240,00', right: true },
  { title: 'Способ списания', width: 108, value: 'Из резерва' },
];

/* ---------- small pieces ---------- */

const Tools = ({ items }) => items.map((item, i) => (
  item
    ? <IconButton key={item[0]} aria-label={item[1]}><Svg>{icons[item[0]]}</Svg></IconButton>
    : <Separator key={`sep${i}`} />
));

const More = () => (
  <MoreButton aria-label="Еще">
    <svg width="7" height="4" viewBox="0 0 7 4" aria-hidden="true"><path d="M0 0H7L3.500 4Z" fill="#4a3600" /></svg>
  </MoreButton>
);

const Caret = () => (
  <svg width="5" height="3" viewBox="0 0 5 3" shapeRendering="crispEdges" aria-hidden="true">
    <path d="M0 0H5V1H4V2H3V3H2V2H1V1H0Z" fill="#5a4500" />
  </svg>
);

const SelectButton = () => <FieldButton aria-label="Выбрать"><Dots>...</Dots></FieldButton>;

const Glass = () => (
  <svg width="12" height="12" viewBox="0 0 12 12" aria-hidden="true">
    <circle cx="5" cy="5" r="3.500" fill="none" stroke="#7a621c" strokeWidth="1.500" />
    <path d="M8 8L10.500 10.500" stroke="#5a4500" strokeWidth="2" />
  </svg>
);

const OpenButton = () => <FieldButton aria-label="Открыть"><Glass /></FieldButton>;

function App() {
  const numberRef = useRef(null);

  useEffect(() => {
    numberRef.current.focus();
    numberRef.current.select();
  }, []);

  return (
    <Window>
      <GlobalStyle />
      <TitleBar>
        <svg width="16" height="16" viewBox="0 0 16 16" aria-hidden="true">
          <circle cx="8" cy="8" r="7" fill="#ffd83a" stroke="#e8a818" />
          <path d="M2 6L4 5V10M3 10H5" stroke="#d81818" strokeWidth="1.500" fill="none" />
          <path d="M10 6.500A2 2 0 1 0 9 9.500H14" stroke="#d81818" strokeWidth="1.500" fill="none" />
        </svg>
        <WindowTitle>"Управление торговлей", редакция 10.3 / Бочков Алексей</WindowTitle>
        <WindowButtons>
          <WindowButton aria-label="Свернуть">
            <svg width="12" height="12" aria-hidden="true"><path d="M1.500 5.500H10.500V8.500H1.500Z" fill="#fff" stroke="#444a58" /></svg>
          </WindowButton>
          <WindowButton aria-label="Развернуть">
            <svg width="12" height="12" aria-hidden="true">
              <path d="M4 1H11V8" fill="none" stroke="#fff" strokeWidth="1" />
              <path d="M2 4H8V10H2Z" fill="none" stroke="#fff" strokeWidth="2" />
            </svg>
          </WindowButton>
          <WindowButton $close aria-label="Закрыть">
            <svg width="12" height="12" aria-hidden="true">
              <path d="M2 2L10 10M10 2L2 10" stroke="#4a3038" strokeWidth="4" />
              <path d="M2 2L10 10M10 2L2 10" stroke="#fff" strokeWidth="2.500" />
            </svg>
          </WindowButton>
        </WindowButtons>
      </TitleBar>

      <MenuBar>
        <Grip $first />
        {menu.map(({ text, key }) => (
          <MenuItem key={text} $wide={key !== undefined}>
            {key === undefined ? text : <>{text.slice(0, key)}<u>{text[key]}</u>{text.slice(key + 1)}</>}
          </MenuItem>
        ))}
      </MenuBar>

      <Toolbar>
        <Grip $first />
        <Tools items={fileTools} />
        <SearchBox>
          <SearchInput aria-label="Строка поиска" />
          <SearchButton aria-label="История поиска">
            <svg width="8" height="4" aria-hidden="true"><path d="M0 0H8L4 4Z" fill="#a39c92" /></svg>
          </SearchButton>
          <SearchButton aria-label="Очистить">
            <svg width="8" height="8" aria-hidden="true"><path d="M1 1L7 7M7 1L1 7" stroke="#a39c92" strokeWidth="2" /></svg>
          </SearchButton>
        </SearchBox>
        <Tools items={[['findNext', 'Найти далее'], ['findPrev', 'Найти ранее'], null, ['windows', 'Окна'], null, ['info', 'Информация']]} />
        <More />
        <Grip />
        <Tools items={[['calc', 'Калькулятор'], ['calendar', 'Календарь'], ['userLock', 'Пользователь'], null]} />
        <MemoryButton>M</MemoryButton>
        <MemoryButton>M+</MemoryButton>
        <MemoryButton>M−</MemoryButton>
        <Tools items={[null, ['wrench', 'Настройка']]} />
        <More />
      </Toolbar>

      <Toolbar $last>
        <Grip $first />
        <Tools items={commonTools} />
        <More />
        <Grip />
        <Tools items={tradeTools} />
        <More />
        <Grip />
        <Tools items={reportTools} />
        <More />
      </Toolbar>

      <DocWindow>
        <DocTitleBar>
          <Svg>{icons.doc}</Svg>
          <DocTitle>Реализация товаров и услуг: продажа, комиссия. Не проведен</DocTitle>
          <DocButton aria-label="Свернуть документ">
            <svg width="12" height="12" aria-hidden="true"><path d="M2 9H10V11H2Z" fill="#333" /></svg>
          </DocButton>
          <DocButton aria-label="Восстановить документ">
            <svg width="12" height="12" shapeRendering="crispEdges" aria-hidden="true">
              <path d="M3 0H12V8H8V7H11V2H4V3H3ZM0 3H9V11H0ZM1 5V10H8V5Z" fill="#333" fillRule="evenodd" />
            </svg>
          </DocButton>
          <DocButton aria-label="Закрыть документ">
            <svg width="12" height="12" aria-hidden="true"><path d="M2 2L10 10M10 2L2 10" stroke="#333" strokeWidth="2.500" /></svg>
          </DocButton>
        </DocTitleBar>

        <DocToolbar>
          <TextButton>Операция<Caret /></TextButton>
          <TextButton>Цены и валюта...</TextButton>
          <Separator />
          <TextButton>Действия<Caret /></TextButton>
          <Tools items={[null, ['docBack', 'Записать'], null, ['refresh', 'Обновить'], ['docPlus', 'Скопировать документ'], null, ['post', 'Провести'], ['unpost', 'Отмена проведения'], null]} />
          <TextButton aria-label="На основании" $tight><Svg>{icons.goTo}</Svg><Caret /></TextButton>
          <Separator />
          <TextButton>Перейти<Caret /></TextButton>
          <Tools items={[null, ['help', 'Справка'], ['listView', 'Список'], ['checks', 'Флажки'], null]} />
          <TextButton $tight><Svg>{icons.files}</Svg>Файлы</TextButton>
          <Separator />
          <TextButton>Заполнить и провести</TextButton>
          <Separator />
          <TextButton $tight><Svg>{icons.issueDocs}</Svg>Оформить документы</TextButton>
        </DocToolbar>

        <Form>
          <FormColumn>
            <FormRow>
              <Label htmlFor="number">Номер:</Label>
              <Field $grow={398}><FieldInput id="number" ref={numberRef} defaultValue="УТВЕЛ021214" $shaded /></Field>
              <InlineLabel htmlFor="date">от:</InlineLabel>
              <Field $grow={385}>
                <FieldInput id="date" defaultValue="22.06.2017  0:00:00" />
                <FieldButton aria-label="Календарь">
                  <svg width="12" height="12" shapeRendering="crispEdges" aria-hidden="true">
                    <path d="M3 0H11V9H9V11H1V2H3Z" fill="#7a6428" />
                    <path d="M4 2H6V3H4ZM7 2H8V3H7ZM9 2H10V3H9ZM2 4H4V5H2ZM5 4H6V5H5ZM7 4H8V5H7ZM9 4H10V5H9ZM2 6H4V7H2ZM5 6H6V7H5ZM7 6H8V7H7ZM9 6H10V7H9ZM2 8H4V9H2ZM5 8H6V9H5ZM7 8H8V9H7Z" fill="#ebe5da" />
                  </svg>
                </FieldButton>
              </Field>
            </FormRow>
            <FormRow>
              <Label htmlFor="company">Организация:</Label>
              <Field><FieldInput id="company" defaultValue="ВЕЛЕС" /><SelectButton /><OpenButton /></Field>
            </FormRow>
            <FormRow>
              <Label htmlFor="partner">Контрагент:</Label>
              <Field><FieldInput id="partner" defaultValue="Бочков Алексей" /><SelectButton /><OpenButton /></Field>
            </FormRow>
            <FormRow>
              <Label htmlFor="order">Заказ покупателя:</Label>
              <Field $width={220}>
                <FieldInput id="order" defaultValue="Заказ покупателя УТВЕЛ008066" />
                <SelectButton />
                <FieldButton aria-label="Очистить заказ">
                  <svg width="8" height="8" aria-hidden="true"><path d="M1 1L7 7M7 1L1 7" stroke="#5a4500" strokeWidth="2" /></svg>
                </FieldButton>
                <OpenButton />
              </Field>
            </FormRow>
          </FormColumn>

          <FormColumn>
            <FormRow>
              <SideLabel as="span">Отразить в:</SideLabel>
              <CheckLabel><Checkbox type="checkbox" defaultChecked />упр. учете</CheckLabel>
              <CheckLabel $disabled><Checkbox type="checkbox" disabled />бух. учете</CheckLabel>
              <CheckLabel $disabled><Checkbox type="checkbox" disabled />налог. учете</CheckLabel>
            </FormRow>
            <FormRow>
              <Field $width={88}><FieldInput aria-label="Источник" defaultValue="Со склада" /><SelectButton /></Field>
              <Gap />
              <Field><FieldInput aria-label="Склад" defaultValue="Основной" /><SelectButton /><OpenButton /></Field>
            </FormRow>
            <FormRow>
              <SideLabel htmlFor="contract">Договор:</SideLabel>
              <Field><FieldInput id="contract" defaultValue="Нальный договор" /><SelectButton /><OpenButton /></Field>
            </FormRow>
            <FormRow $end>
              <DebtLink href="#debt">По договору с покупателем нет долга</DebtLink>
              <DebtButton aria-label="Показать долг"><Glass /></DebtButton>
            </FormRow>
          </FormColumn>
        </Form>

        <Tabs role="tablist">
          {tabs.map((tab, i) => (
            <Tab key={tab} role="tab" aria-selected={i === 0} $active={i === 0}>{tab}</Tab>
          ))}
        </Tabs>

        <Panel role="tabpanel">
          <RowToolbar>
            <Tools items={rowTools} />
            <TextButton>Заполнить<Caret /></TextButton>
            <Separator />
            <TextButton>Подбор</TextButton>
            <Separator />
            <TextButton>Изменить</TextButton>
            <Separator />
            <TextButton $tight><Svg>{icons.bundle}</Svg>Состав набора</TextButton>
          </RowToolbar>
          <TableArea>
            <Table>
              <colgroup>
                {columns.map(col => <col key={col.title} width={col.width} />)}
              </colgroup>
              <thead>
                <tr>
                  {columns.map(col => (
                    <HeadCell key={col.title} $active={col.active} $center={col.center}>{col.title}</HeadCell>
                  ))}
                </tr>
              </thead>
              <tbody>
                <tr>
                  {columns.map(col => (
                    <Cell key={col.title} $active={col.active} $right={col.right}>{col.value}</Cell>
                  ))}
                </tr>
              </tbody>
            </Table>
            <Marker />
            <Note>вот в итоге товар вода талая фромин исчез из реализации</Note>
          </TableArea>
        </Panel>
      </DocWindow>
    </Window>
  );
}

/* ---------- styles ---------- */

const line = '#b0a880';
const bar = '#ebe5da';
const brown = '#5a4500';

const GlobalStyle = createGlobalStyle`
  * {
    box-sizing: border-box;
  }

  body {
    margin: 0;
    background: ${bar};
    font-family: 'Liberation Sans', Arial, sans-serif;
    font-size: 11px;
    line-height: 13px;
    color: #3b2c00;
    overflow: hidden;
  }

  button,
  input {
    font: inherit;
    color: inherit;
  }

  button {
    border: 0;
    padding: 0;
    background: none;
    white-space: nowrap;
  }

  svg {
    display: block;
    flex: none;
  }
`;

const Window = styled.div`
  display: flex;
  flex-direction: column;
  height: 100vh;
`;

const TitleBar = styled.header`
  display: flex;
  align-items: center;
  flex: none;
  height: 22px;
  padding: 0 2px 0 0;
  border-bottom: 1px solid #16181f;
  box-shadow: inset 0 -1px #a8b4be;
  background:
    radial-gradient(ellipse 20px 14px at 418px 20px, #6f9cc4, transparent),
    radial-gradient(ellipse 20px 14px at 494px 20px, #86a8a8, transparent),
    radial-gradient(ellipse 20px 14px at 570px 20px, #6f9cc4, transparent),
    radial-gradient(ellipse 20px 14px at 646px 20px, #7fa49c, transparent),
    radial-gradient(ellipse 22px 14px at 793px 20px, #5a86b0, transparent),
    radial-gradient(ellipse 40px 20px at 1160px 4px, #2c567c, transparent),
    linear-gradient(90deg, #66747f 0, #8896a2 40px, #9aa8b2 180px, #8593a0 330px, #1c3048 370px, #142a44 560px, #1c2a48 720px, #20384a 950px, #12293a 1120px, #1a2c3c 1500px, #2a3238 1790px, #6a7078 1820px, #5a5f66 100%);
`;

const WindowTitle = styled.h1`
  flex: 1;
  margin: 0 0 0 5px;
  font: 12px/16px Roboto, 'Open Sans', sans-serif;
  color: #000;
  text-shadow: 0 0 6px #fff, 0 0 10px #dde4ea;
`;

const WindowButtons = styled.div`
  display: flex;
  align-self: flex-start;
  height: 19px;
  border: 1px solid #d0d4d8;
  border-top: 0;
  border-radius: 0 0 5px 5px;
  overflow: hidden;
`;

const WindowButton = styled.button`
  display: flex;
  align-items: center;
  justify-content: center;
  width: ${({ $close }) => ($close ? 47 : 27)}px;
  border-right: 1px solid #b8bcc2;
  background: ${({ $close }) => ($close
    ? 'linear-gradient(#e0a090, #c86850 48%, #a82810 52%, #d05838)'
    : 'linear-gradient(#b4b8bc, #84888e 48%, #50545c 52%, #787c84)')};

  &:last-child {
    border-right: 0;
  }
`;

const MenuBar = styled.nav`
  display: flex;
  align-items: center;
  flex: none;
  height: 24px;
`;

const MenuItem = styled.button`
  padding: 0 ${({ $wide }) => ($wide ? 8 : 4)}px;
`;

const Toolbar = styled.div`
  display: flex;
  align-items: center;
  flex: none;
  height: ${({ $last }) => ($last ? 28 : 24)}px;
  border-bottom: ${({ $last }) => ($last ? '1px solid #9c9890' : '0')};
`;

const Grip = styled.span`
  width: 3px;
  height: 14px;
  margin: 0 3px 0 ${({ $first }) => ($first ? 3 : 6)}px;
  background: repeating-linear-gradient(#b0a888 0 1px, transparent 1px 2px);
`;

const IconButton = styled.button`
  display: flex;
  align-items: center;
  justify-content: center;
  width: 23px;
  height: 22px;
`;

const MemoryButton = styled(IconButton)`
  font-weight: bold;
  font-size: 12px;
  color: #b0a89e;
`;

const Separator = styled.span`
  width: 2px;
  height: 20px;
  margin: 0 2px 0 1px;
  background: linear-gradient(90deg, #c4bc9c 50%, #fffdf4 50%);
`;

const MoreButton = styled.button`
  display: flex;
  align-items: flex-end;
  justify-content: center;
  width: 12px;
  height: 17px;
`;

const SearchBox = styled.div`
  display: flex;
  width: 149px;
  height: 19px;
  border: 1px solid #faf0c8;
`;

const SearchInput = styled.input`
  flex: 1;
  min-width: 0;
  border: 0;
  padding: 0 3px;
  background: #fffbf0;
`;

const SearchButton = styled.button`
  display: flex;
  align-items: center;
  justify-content: center;
  width: 15px;
  border-left: 1px solid #faf0c8;
`;

const DocWindow = styled.section`
  display: flex;
  flex-direction: column;
  flex: 1;
  min-height: 0;
  border-top: 1px solid #6c6c6c;
  border-left: 2px solid #77777c;
  border-right: 1px solid #dcdcdc;
  background: #fffbf0;
`;

const DocTitleBar = styled.div`
  display: flex;
  align-items: center;
  flex: none;
  gap: 8px;
  height: 19px;
  padding: 0 3px 0 1px;
  border-bottom: 1px solid #6c6c74;
  background: #ccc;
`;

const DocTitle = styled.h2`
  flex: 1;
  margin: 0 0 0 -4px;
  font-size: 12px;
  font-weight: bold;
  color: #333;
`;

const DocButton = styled.button`
  width: 12px;
  height: 12px;
`;

const DocToolbar = styled.div`
  display: flex;
  align-items: center;
  flex: none;
  height: 25px;
  border-bottom: 1px solid ${line};
  background: ${bar};
  color: ${brown};
`;

const TextButton = styled.button`
  display: flex;
  align-items: center;
  gap: ${({ $tight }) => ($tight ? 2 : 4)}px;
  height: 20px;
  padding: 0 4px;
`;

const Form = styled.form`
  display: grid;
  grid-template-columns: 885fr 995fr;
  gap: 20px;
  flex: none;
  padding: 8px 8px 0;
`;

const FormColumn = styled.div`
  display: grid;
  grid-auto-rows: 19px;
  gap: 5px;
  min-width: 0;
`;

const FormRow = styled.div`
  display: flex;
  align-items: center;
  justify-content: ${({ $end }) => ($end ? 'flex-end' : 'flex-start')};
  min-width: 0;
`;

const Label = styled.label`
  flex: none;
  width: 82px;
  padding-right: 14px;
`;

const SideLabel = styled(Label)`
  width: 90px;
`;

const InlineLabel = styled.label`
  flex: none;
  width: 20px;
  text-align: center;
`;

const Gap = styled.span`
  flex: none;
  width: 2px;
`;

const Field = styled.div`
  display: flex;
  flex: ${({ $width, $grow }) => ($width ? `none` : `${$grow || 1} 1 0`)};
  width: ${({ $width }) => ($width ? `${$width}px` : 'auto')};
  min-width: 0;
  height: 19px;
  border: 1px solid ${line};
  background: #fff;
`;

const FieldInput = styled.input`
  flex: 1;
  min-width: 0;
  border: 0;
  padding: 0 0 0 2px;
  color: #000;
  background: #fff;
  outline: none;

  ${({ $shaded }) => $shaded && css`
    margin: 2px;
    padding: 0;
    background: #fffaf0;
  `}

  &::selection {
    color: #fff;
    background: #5068c0;
  }
`;

const FieldButton = styled.button`
  display: flex;
  align-items: center;
  justify-content: center;
  flex: none;
  width: 15px;
  border-left: 1px solid ${line};
  background: ${bar};
`;

const Dots = styled.span`
  font-size: 12px;
  font-weight: bold;
  line-height: 12px;
  color: ${brown};
`;

const CheckLabel = styled.label`
  display: flex;
  align-items: center;
  gap: 2px;
  margin-right: 11px;
  color: ${({ $disabled }) => ($disabled ? '#a08a50' : '#3b2c00')};
`;

const Checkbox = styled.input`
  appearance: none;
  width: 13px;
  height: 13px;
  margin: 0;
  border: 1px solid #a39b78;
  border-radius: 2px;
  background: #fff;

  &:checked::after {
    content: '';
    display: block;
    width: 4px;
    height: 8px;
    margin: 0 auto;
    border: solid #333;
    border-width: 0 2px 2px 0;
    rotate: 40deg;
  }

  &:disabled {
    border-color: #dcd6c4;
    background: #fffbf0;
  }
`;

const DebtLink = styled.a`
  color: #4a62b8;
  text-decoration: none;
`;

const DebtButton = styled(FieldButton)`
  height: 19px;
  margin-left: 2px;
  border: 1px solid #c8c0a0;
  border-radius: 2px;
`;

const Tabs = styled.div`
  display: flex;
  align-items: flex-end;
  flex: none;
  height: 18px;
  margin: 8px 8px 0;
`;

const Tab = styled.button`
  height: 17px;
  padding: 1px 6px 0;
  border-right: 1px solid #fffbf0;
  border-top: 1px solid #f5efd6;
  background: #f6efe2;

  ${({ $active }) => $active && css`
    position: relative;
    height: 19px;
    margin-bottom: -1px;
    padding: 1px 5px 0;
    border: 1px solid ${line};
    border-bottom: 0;
    border-radius: 2px 2px 0 0;
    background: #fffbf0;
  `}
`;

const Panel = styled.div`
  display: flex;
  flex-direction: column;
  flex: 1;
  min-height: 0;
  margin: 0 8px;
  padding: 0 6px;
  border: 1px solid ${line};
  border-bottom: 0;
`;

const RowToolbar = styled.div`
  display: flex;
  align-items: center;
  flex: none;
  height: 24px;
`;

const TableArea = styled.div`
  position: relative;
  flex: 1;
  min-height: 0;
  border: 1px solid ${line};
  border-bottom: 0;
  background: #fff;
`;

const Table = styled.table`
  width: 100%;
  table-layout: fixed;
  border-collapse: separate;
  border-spacing: 0;
`;

const cell = css`
  padding: 0 3px;
  border-right: 1px solid ${line};
  border-bottom: 1px solid ${line};
  white-space: nowrap;
  overflow: hidden;

  &:last-child {
    border-right: 0;
  }
`;

const HeadCell = styled.th`
  ${cell}
  height: 21px;
  padding-left: 4px;
  font-weight: normal;
  text-align: ${({ $center }) => ($center ? 'center' : 'left')};
  color: ${({ $active }) => ($active ? '#3b2c00' : brown)};
  background: ${({ $active }) => ($active ? '#cecab4' : '#f5f2dd')};
`;

const Cell = styled.td`
  ${cell}
  height: 19px;
  padding-left: 4px;
  text-align: ${({ $right }) => ($right ? 'right' : 'left')};
  color: ${({ $active }) => ($active ? '#fff' : '#000')};
  background: ${({ $active }) => ($active ? '#5068c0' : '#fff')};
`;

const Marker = styled.div`
  width: 30px;
  height: 26px;
  margin: 5px 0 0 3px;
  border: 3px solid #f00;
  border-radius: 2px;
`;

const Note = styled.p`
  position: absolute;
  top: 282px;
  left: 0;
  right: 10px;
  margin: 0;
  text-align: center;
  font: 13px/16px 'DejaVu Sans', Verdana, sans-serif;
  color: #f00;
`;

export default App;
